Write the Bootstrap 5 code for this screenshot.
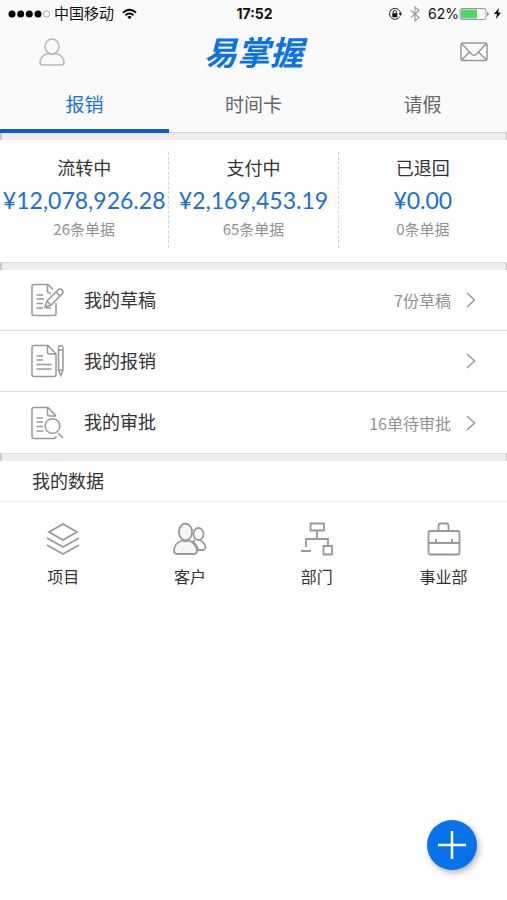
<!DOCTYPE html>
<html lang="zh-CN">
<head>
<meta charset="utf-8">
<meta name="viewport" content="width=device-width, initial-scale=1">
<title>易掌握</title>
<link href="https://cdn.jsdelivr.net/npm/bootstrap@5.3.0/dist/css/bootstrap.min.css" rel="stylesheet">
<style>
body { font-family: Lato, "Noto Sans CJK SC", sans-serif; color: #333; background: #fff; }
svg { display: block; fill: none; stroke: #999; stroke-width: 1.5; flex: none; }
.top-area { background: #fafafa; }
.status-bar { height: 27px; padding: 0 6px 0 8px; font-family: Inter, "Noto Sans CJK SC", sans-serif; font-size: 14px; line-height: 27px; color: #111; }
.status-bar > div { flex: 1 1 0; }
.carrier { font-size: 15px; }
.brand-bar { height: 50px; padding: 0 18px; }
.brand-name { font-size: 33px; line-height: 50px; font-weight: 700; font-style: italic; color: #0a73e8; }
.brand-bar > div { flex: 1 1 0; }
.user-btn { margin-left: 20px; }
.tab-row { border-bottom: 1px solid #d2d2d2; }
.tab-row .nav-link { height: 56px; padding: 0; font-size: 19px; line-height: 56px; color: #666; border-radius: 0; border-bottom: 4px solid transparent; margin-bottom: -1px; }
.tab-row .nav-link.active { color: #1a73dc; border-color: #0b5fc4; }
.divider-band { height: 8px; background: #ededed; border: 1px solid #dcdcdc; border-width: 1px 1px 0 2px; border-color: #dcdcdc #c8c8c8; }
.divider-band.plain { height: 7px; border-top: 0; }
.stats { padding: 12px 0 14px; }
.stat { flex: 1 1 0; min-width: 0; height: 96px; }
.stat + .stat { border-left: 1px dashed #d2d2d2; }
.stat-title { font-size: 18px; line-height: 32px; }
.stat-sum { font-size: 23px; line-height: 33px; color: #1a6fd4; white-space: nowrap; }
.stat-count, .menu-note { font-family: "Noto Sans CJK SC", sans-serif; color: #919191; }
.stat-count { font-size: 15px; line-height: 24px; }
.menu-row { height: 61px; padding: 0 31px; font-size: 18px; border-bottom: 1px solid #dedede; color: #333; }
.menu-row:last-child { border-bottom: 0; }
.menu-label { margin-left: 19px; }
.menu-note { font-size: 16px; margin-right: 15px; }
.section-title { height: 41px; margin: 0; padding: 0 32px; font-size: 18px; line-height: 40px; font-weight: 400; border-bottom: 1px solid #eee; }
.data-link { flex: 1 1 0; padding-top: 20px; font-size: 16px; line-height: 24px; color: #333; }
.data-link svg { margin: 0 auto 7px; stroke-width: 1.8; }
.add-btn { right: 30px; bottom: 30px; width: 50px; height: 50px; background: #0872ea; box-shadow: 2px 3px 6px rgba(0,0,0,.3); }
</style>
<script src="https://cdn.jsdelivr.net/npm/bootstrap@5.3.0/dist/js/bootstrap.bundle.min.js" defer></script>
</head>
<body>
<header class="top-area">
  <div class="status-bar d-flex">
    <div class="d-flex align-items-center">
      <svg width="42" height="10" viewBox="0 0 42 10"><g fill="#000" stroke="none"><circle cx="4" cy="5" r="3.5"/><circle cx="12.7" cy="5" r="3.5"/><circle cx="21.3" cy="5" r="3.5"/><circle cx="30" cy="5" r="3.5"/></g><circle cx="38.5" cy="5" r="3.1" stroke-width=".8"/></svg>
      <span class="carrier ms-1">中国移动</span>
      <svg class="ms-2" width="15" height="12" viewBox="0 0 16 12"><g style="stroke:#000;stroke-width:2"><path d="M1 4.500q7-6 14 0M3.700 7.300q4.300-3.600 8.600 0"/></g><path d="M5.600 9q2.400-1.900 4.800 0L8 11.600z" fill="#000" stroke="none"/></svg>
    </div>
    <strong class="fw-bold">17:52</strong>
    <div class="d-flex align-items-center justify-content-end">
      <svg width="14" height="14" viewBox="0 0 14 14"><g style="stroke:#222;stroke-width:1"><path d="M11.800 9.500A5.500 5.500 0 1 1 12.500 7"/><path d="M5.200 6.500V5a1.600 1.600 0 0 1 3.200 0v1.500"/></g><path d="M4.300 6.200h5v4h-5zM10.800 6.300h3.200L12.400 9z" fill="#111" stroke="none"/></svg>
      <svg class="ms-2" width="10" height="16" viewBox="0 0 10 16"><path d="M1 4.500l8 7L5 15V1l4 3.500-8 7" style="stroke-width:1.100"/></svg>
      <span class="ms-2">62%</span>
      <svg width="31" height="14" viewBox="0 0 31 14"><rect x="1" y="1.500" width="26" height="11" rx="2" stroke-width="1"/><path d="M2 2.500h16v9H2z" fill="#4cd964" stroke="none"/><path d="M28.500 5q2 2 0 4z" fill="#333" stroke="none"/></svg>
      <svg class="ms-1" width="7" height="11" viewBox="0 0 7 11"><path d="M5 0L0 6h3L2 11l5-6.500H4z" fill="#000" stroke="none"/></svg>
    </div>
  </div>
  <div class="brand-bar d-flex align-items-center">
    <div><button class="user-btn btn p-0 border-0" aria-label="个人中心"><svg width="28" height="28" viewBox="0 0 28 28" style="stroke:#b8b8b8"><ellipse cx="14" cy="8.500" rx="7" ry="7.500"/><path d="M10 15.500C5 17 2 20 2 24q0 3 3 3h18q3 0 3-3c0-4-3-7-8-8.500q-4 1.500-8 0z"/></svg></button></div>
    <h1 class="brand-name m-0">易掌握</h1>
    <div class="d-flex justify-content-end"><button class="btn p-0 border-0" aria-label="消息"><svg width="30" height="20" viewBox="0 0 30 20"><rect x="2" y="1" width="26" height="17.500" rx="2"/><path d="M2.500 1.500L13 12.500q2 1.600 4 0L27.500 1.500M2.500 18l8-8M27.500 18l-8-8"/></svg></button></div>
  </div>
  <nav class="tab-row nav nav-fill flex-nowrap">
    <a class="nav-link nav-item active w-100" href="#">报销</a>
    <a class="nav-link nav-item w-100" href="#">时间卡</a>
    <a class="nav-link nav-item w-100" href="#">请假</a>
  </nav>
</header>
<main>
  <div class="divider-band plain"></div>
  <section class="stats d-flex text-center">
    <div class="stat"><div class="stat-title">流转中</div><div class="stat-sum">¥12,078,926.28</div><div class="stat-count">26条单据</div></div>
    <div class="stat"><div class="stat-title">支付中</div><div class="stat-sum">¥2,169,453.19</div><div class="stat-count">65条单据</div></div>
    <div class="stat"><div class="stat-title">已退回</div><div class="stat-sum">¥0.00</div><div class="stat-count">0条单据</div></div>
  </section>
  <div class="divider-band"></div>
  <nav>
    <a class="menu-row d-flex align-items-center text-decoration-none" href="#">
      <svg width="34" height="34" viewBox="0 0 34 34"><path d="M22 6.500L17 1.500H3q-2 0-2 2v27q0 2 2 2h20q2 0 2-2V20M16.500 1.500V8q0 2 2 2H20M5.500 12H12M5.500 16H13M5.500 20.500H12M5.500 25H12M15 25h5"/><path d="M14 24l2-6L27 7q2-2 4 0t0 4L20 22zM16 18l4 4M25 9l4 4"/></svg>
      <span class="menu-label">我的草稿</span><span class="menu-note ms-auto">7份草稿</span>
      <svg width="10" height="18" viewBox="0 0 10 18"><path d="M1 2l7.500 7L1 16"/></svg>
    </a>
    <a class="menu-row d-flex align-items-center text-decoration-none" href="#">
      <svg width="34" height="34" viewBox="0 0 34 34"><path d="M25 10L17 1.500H3q-2 0-2 2v27q0 2 2 2h20q2 0 2-2V10M16.500 1.500V8q0 2 2 2H25M5.500 12H12M5.500 16H12M5.500 20.500H20.500M5.500 25H20.500"/><path d="M27.500 26V4q0-2.500 2.300-2.500T32 4v22l-2.200 5.500zM27.500 6H32M27.500 26H32"/></svg>
      <span class="menu-label">我的报销</span>
      <svg class="ms-auto" width="10" height="18" viewBox="0 0 10 18"><path d="M1 2l7.500 7L1 16"/></svg>
    </a>
    <a class="menu-row d-flex align-items-center text-decoration-none" href="#">
      <svg width="34" height="34" viewBox="0 0 34 34"><path d="M25 10L17 1.500H3q-2 0-2 2v27q0 2 2 2h20q2 0 2-2V30M16.500 1.500V8q0 2 2 2H25M5.500 12H12M5.500 16H12M5.500 20.500H12M5.500 25H12"/><circle cx="21.500" cy="20" r="7.300"/><path d="M27 27l5 5"/></svg>
      <span class="menu-label">我的审批</span><span class="menu-note ms-auto">16单待审批</span>
      <svg width="10" height="18" viewBox="0 0 10 18"><path d="M1 2l7.500 7L1 16"/></svg>
    </a>
  </nav>
  <div class="divider-band"></div>
  <h2 class="section-title">我的数据</h2>
  <nav class="d-flex text-center">
    <a class="data-link text-decoration-none" href="#"><svg width="34" height="36" viewBox="0 0 34 36"><path d="M17 2L31 10 17 18 3 10zM1 16l16 9 16-9M1 23l16 9 16-9"/></svg>项目</a>
    <a class="data-link text-decoration-none" href="#"><svg width="34" height="36" viewBox="0 0 34 36"><ellipse cx="25.500" cy="12" rx="5" ry="6"/><path d="M22 18q-2 1-2 2 4 3 5 8h5q3-1 2.500-3-1-5-6-7"/><ellipse cx="12.500" cy="10" rx="6.500" ry="8.500" fill="#f6f6f6"/><path d="M9 18.500q-8 3-8 10Q1 32 4 32h17q3 0 3-3.500-1-7-8-10-3.500 1.500-7 0z" fill="#f6f6f6"/></svg>客户</a>
    <a class="data-link text-decoration-none" href="#"><svg width="34" height="36" viewBox="0 0 34 36"><path d="M10.500 1.500H24v7H10.500zM17 8.500V17M6 25v-8h22v7M23.500 24H32v8.500h-8.500zM1 29h10"/></svg>部门</a>
    <a class="data-link text-decoration-none" href="#"><svg width="34" height="36" viewBox="0 0 34 36"><rect x="1.500" y="9" width="31" height="23.500" rx="2"/><path d="M11.500 9V4q0-2.500 2-2.500h6q2 0 2 2.500v5M1.500 21h31M9 17v4M25 17v4"/></svg>事业部</a>
  </nav>
</main>
<button class="add-btn btn p-0 border-0 rounded-circle position-fixed d-flex align-items-center justify-content-center" aria-label="新增"><svg width="30" height="30" viewBox="0 0 30 30" style="stroke:#fff;stroke-width:2.500"><path d="M15 1v28M1 15h28"/></svg></button>
</body>
</html>
